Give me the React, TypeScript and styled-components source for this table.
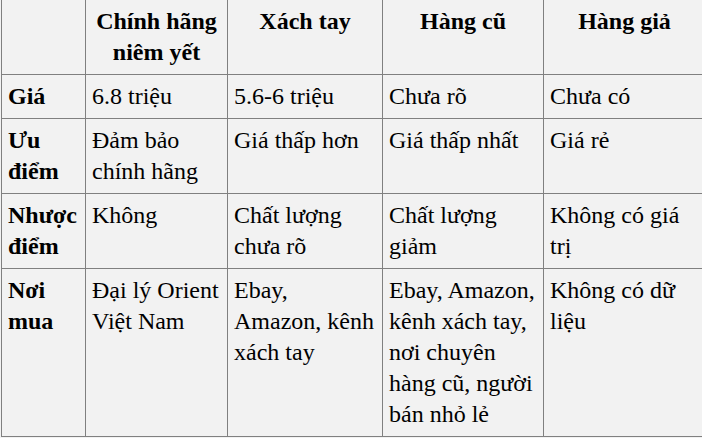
import React from 'react';
import styled, { createGlobalStyle } from 'styled-components';

const GlobalStyle = createGlobalStyle`
  html, body {
    margin: 0;
    padding: 0;
    background: rgb(242, 242, 242);
    overflow: hidden;
  }
`;

// table is cropped at the top and right edge in the screenshot
const Page = styled.div`
  padding-left: 1px;
  margin-top: -1px;
`;

const Table = styled.table`
  border-collapse: collapse;
  table-layout: fixed;
  width: 704px;
  background: rgb(242, 242, 242);
  color: rgb(0, 0, 0);
  font-family: 'Liberation Serif', 'Times New Roman', serif;
  font-size: 24px;
  line-height: 31px;
`;

const HeadCell = styled.th<{ $align?: 'left' | 'center' }>`
  border: 1px solid rgb(128, 128, 128);
  padding: 6px;
  font-weight: bold;
  text-align: ${(p) => p.$align ?? 'center'};
  vertical-align: top;
`;

const Cell = styled.td`
  border: 1px solid rgb(128, 128, 128);
  padding: 6px;
  text-align: left;
  vertical-align: top;
`;

const columns = [84, 142, 155, 161, 162];

const headers = ['', 'Chính hãng niêm yết', 'Xách tay', 'Hàng cũ', 'Hàng giả'];

const rows: { label: string; values: string[] }[] = [
  { label: 'Giá', values: ['6.8 triệu', '5.6-6 triệu', 'Chưa rõ', 'Chưa có'] },
  {
    label: 'Ưu điểm',
    values: ['Đảm bảo chính hãng', 'Giá thấp hơn', 'Giá thấp nhất', 'Giá rẻ'],
  },
  {
    label: 'Nhược điểm',
    values: ['Không', 'Chất lượng chưa rõ', 'Chất lượng giảm', 'Không có giá trị'],
  },
  {
    label: 'Nơi mua',
    values: [
      'Đại lý Orient Việt Nam',
      'Ebay, Amazon, kênh xách tay',
      'Ebay, Amazon, kênh xách tay, nơi chuyên hàng cũ, người bán nhỏ lẻ',
      'Không có dữ liệu',
    ],
  },
];

const App: React.FC = () => (
  <>
    <GlobalStyle />
    <Page>
      <Table>
        <colgroup>
          {columns.map((w, i) => (
            <col key={i} style={{ width: w }} />
          ))}
        </colgroup>
        <thead>
          <tr>
            {headers.map((h, i) => (
              <HeadCell key={i}>{h}</HeadCell>
            ))}
          </tr>
        </thead>
        <tbody>
          {rows.map((row) => (
            <tr key={row.label}>
              <HeadCell $align="left">{row.label}</HeadCell>
              {row.values.map((v, i) => (
                <Cell key={i}>{v}</Cell>
              ))}
            </tr>
          ))}
        </tbody>
      </Table>
    </Page>
  </>
);

export default App;
